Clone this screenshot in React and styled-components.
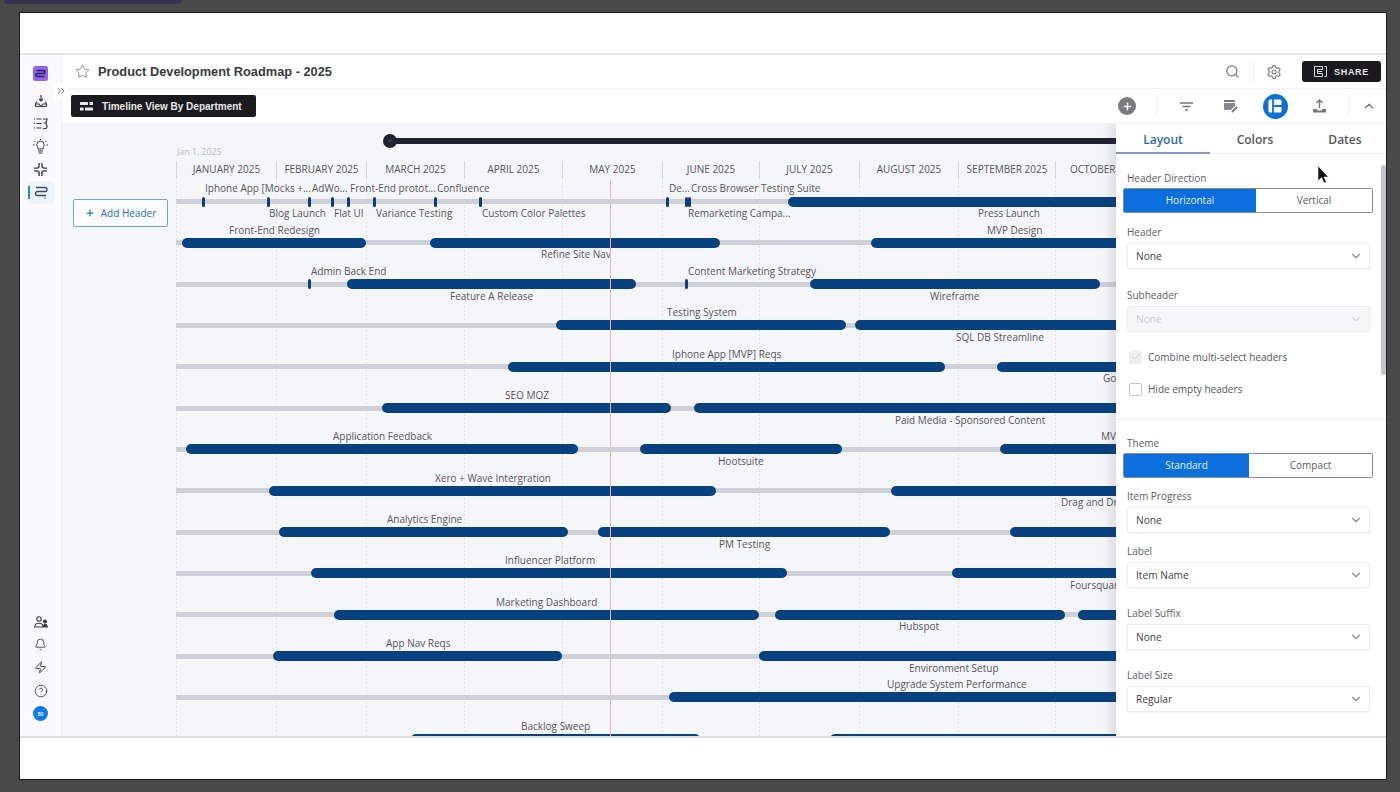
import React from "react";
import styled, { createGlobalStyle } from "styled-components";
import {
  Star,
  ChevronsRight,
  Search,
  Settings,
  Plus,
  ChevronDown,
  ChevronUp,
  Check,
  Bell,
  Zap,
  CircleHelp,
} from "lucide-react";

const GlobalStyle = createGlobalStyle`
  html, body {
    margin: 0;
    padding: 0;
    height: 792px;
    overflow: hidden;
    background: #4a4949;
    font-family: "Open Sans", "Liberation Sans", sans-serif;
  }
  * { box-sizing: border-box; }
`;

const Screen = styled.div`
  position: relative;
  width: 1400px;
  height: 792px;
  padding: 12px 13px 12px 19px;
`;

const Pill = styled.div`
  position: absolute;
  top: 0;
  left: 4px;
  width: 178px;
  height: 4px;
  background: #3a3350;
  border-radius: 0 0 8px 8px;
`;

const Frame = styled.div`
  width: 1368px;
  height: 768px;
  background: #fff;
  border: 1px solid #1c1c1c;
  padding-top: 40px;
`;

const AppShell = styled.div`
  display: flex;
  height: 685px;
  border-top: 2px solid #e4e4e6;
  border-bottom: 2px solid #dedee2;
`;

const Sidebar = styled.nav`
  width: 42px;
  flex: none;
  display: flex;
  flex-direction: column;
  justify-content: space-between;
  align-items: center;
  padding: 7px 0 11px;
  background: #fafafc;
  border-right: 1px solid #f0f0f4;
`;

const SideGroup = styled.div`
  display: flex;
  flex-direction: column;
  align-items: center;
`;

const SideIcon = styled.div`
  position: relative;
  width: 26px;
  height: 23px;
  border-radius: 4px;
  display: flex;
  align-items: center;
  justify-content: center;
  color: #3b3b40;
  background: ${(p) => (p.$active ? "#edf4fb" : "transparent")};
  margin-bottom: ${(p) => (p.$first ? "4px" : "0")};
`;

const ActiveMark = styled.span`
  position: absolute;
  left: 0;
  top: 5px;
  width: 2px;
  height: 13px;
  background: #2a86c8;
`;

const Avatar = styled.div`
  width: 15px;
  height: 15px;
  border-radius: 50%;
  background: #0f7ae8;
  color: #d8e9fb;
  font-size: 5px;
  font-weight: 700;
  display: flex;
  align-items: center;
  justify-content: center;
`;

const Main = styled.div`
  position: relative;
  flex: 1;
  min-width: 0;
  display: flex;
  flex-direction: column;
`;

const ExpandTab = styled.div`
  position: absolute;
  left: -8px;
  top: 28px;
  width: 14px;
  height: 16px;
  background: #fff;
  color: #444;
  display: flex;
  align-items: center;
  justify-content: center;
  z-index: 3;
`;

const TitleBar = styled.header`
  height: 34px;
  flex: none;
  display: flex;
  align-items: center;
  padding: 0 5px 0 13px;
  border-bottom: 1px solid #f2f2f5;
`;

const Title = styled.h1`
  margin: 0 0 0 8px;
  font-family: "Liberation Sans", Arial, sans-serif;
  font-size: 12.8px;
  font-weight: 700;
  color: #3a3a3e;
`;

const Spacer = styled.div`
  flex: 1;
`;

const IconSlot = styled.div`
  flex: none;
  width: ${(p) => p.$w || 44}px;
  display: flex;
  align-items: center;
  justify-content: center;
  color: #77777b;
`;

const EdgeSlot = styled(IconSlot)`
  margin-right: -3px;
`;

const Sep = styled.span`
  flex: none;
  width: 1px;
  height: 22px;
  background: #f0f0f3;
`;

const ShareButton = styled.button`
  flex: none;
  width: 79px;
  height: 21px;
  margin-left: 8px;
  border: 0;
  border-radius: 3px;
  background: #1a1a1e;
  color: #e6e6e8;
  font-family: "Liberation Sans", Arial, sans-serif;
  font-size: 9px;
  font-weight: 700;
  letter-spacing: 0.08em;
  display: flex;
  align-items: center;
  justify-content: center;
  gap: 7px;
  padding: 0;
`;

const ViewBar = styled.div`
  height: 35px;
  flex: none;
  display: flex;
  align-items: center;
  padding: 0 0 0 9px;
  border-bottom: 1px solid #f0f0f3;
`;

const ViewButton = styled.button`
  width: 185px;
  height: 22px;
  border: 0;
  border-radius: 2px;
  background: #1b1b1f;
  color: #e8e8ea;
  font-family: "Liberation Sans", Arial, sans-serif;
  font-size: 10px;
  font-weight: 700;
  display: flex;
  align-items: center;
  gap: 9px;
  padding: 0 0 0 9px;
`;

const RoundAdd = styled.div`
  flex: none;
  width: 18px;
  height: 18px;
  border-radius: 50%;
  background: #7b7b7d;
  color: #fff;
  display: flex;
  align-items: center;
  justify-content: center;
`;

const LayoutBadge = styled.div`
  width: 25px;
  height: 25px;
  border-radius: 50%;
  background: #1070d0;
  display: flex;
  align-items: center;
  justify-content: center;
`;

const Body = styled.div`
  position: relative;
  flex: 1;
  min-height: 0;
  display: flex;
  background: #f5f6fa;
  overflow: hidden;
`;

const HeaderColumn = styled.div`
  width: 114px;
  flex: none;
  padding: 75px 0 0 11px;
`;

const AddHeader = styled.button`
  width: 95px;
  height: 28px;
  background: #fbfcfe;
  border: 1px solid #6ea6cc;
  border-radius: 2px;
  color: #2a6fb0;
  font-family: "Open Sans", sans-serif;
  font-size: 10px;
  display: flex;
  align-items: center;
  justify-content: center;
  gap: 6px;
  padding: 0;
`;

const Chart = styled.div`
  position: relative;
  flex: 1;
  min-width: 0;
  padding-top: 14px;
  overflow: hidden;
`;

const SliderTrack = styled.div`
  position: relative;
  height: 6px;
  margin-left: 215px;
  background: #1e2230;
  border-radius: 3px 0 0 3px;
`;

const SliderKnob = styled.span`
  position: absolute;
  left: -8px;
  top: -4px;
  width: 14px;
  height: 14px;
  border-radius: 50%;
  background: #1e2230;
  color: #8a8c94;
  font-size: 6px;
  line-height: 13px;
  text-align: center;
`;

const StartDate = styled.div`
  height: 11px;
  margin-top: 3px;
  font-size: 8.8px;
  line-height: 11px;
  color: #bcbcc2;
  padding-left: 1px;
`;

const Months = styled.div`
  display: flex;
  height: 17px;
  margin-top: 3px;
`;

const Month = styled.div`
  flex: none;
  border-left: 1px solid #d8d8dc;
  font-size: 10px;
  line-height: 17px;
  color: #55555c;
  text-align: center;
  white-space: nowrap;
`;

const GridLine = styled.span`
  position: absolute;
  top: 54px;
  bottom: 0;
  width: 1px;
  background: repeating-linear-gradient(#e2e3e8 0 2px, transparent 2px 4px);
`;

const TodayLine = styled.span`
  position: absolute;
  top: 56px;
  bottom: 0;
  left: 434px;
  width: 1px;
  background: #efb6ba;
  z-index: 2;
`;

const Rows = styled.div`
  position: relative;
  margin-top: 3px;
`;

const Row = styled.div`
  position: relative;
  height: 41.33px;
`;

const Track = styled.span`
  position: absolute;
  left: 0;
  right: 0;
  top: 18px;
  height: 5px;
  background: #cdd0d6;
`;

const Bar = styled.span`
  position: absolute;
  top: 15.5px;
  height: 10px;
  border-radius: 5px;
  background: #07417f;
`;

const Milestone = styled.span`
  position: absolute;
  top: 15.5px;
  width: 3px;
  height: 10px;
  border-radius: 1.5px;
  background: #0d3f78;
`;

const ItemLabel = styled.span`
  position: absolute;
  top: ${(p) => (p.$below ? "25px" : "0.3px")};
  font-size: 10px;
  line-height: 14px;
  color: #55555c;
  white-space: nowrap;
`;

const Panel = styled.aside`
  position: absolute;
  top: 0;
  right: 0;
  bottom: 0;
  width: 270px;
  background: #fff;
  box-shadow: -6px 0 8px rgba(60, 60, 80, 0.12);
  z-index: 4;
`;

const Tabs = styled.div`
  display: flex;
  height: 30px;
  border-bottom: 1px solid #eceef2;
`;

const Tab = styled.div`
  flex: none;
  width: ${(p) => p.$w}px;
  padding-left: ${(p) => p.$pad || 0}px;
  text-align: center;
  font-size: 12px;
  font-weight: 600;
  line-height: 31px;
  height: 30px;
  color: ${(p) => (p.$active ? "#2f6aa5" : "#55555c")};
  border-bottom: ${(p) => (p.$active ? "2px solid #7c9cc0" : "0")};
`;

const PanelBody = styled.div`
  position: relative;
  padding-top: 17px;
`;

const Scrollbar = styled.span`
  position: absolute;
  top: 11px;
  right: 0;
  width: 5px;
  height: 210px;
  border-radius: 3px;
  background: #c5c6cb;
`;

const FieldLabel = styled.div`
  margin: ${(p) => p.$top || 0}px 0 0 11px;
  height: 14px;
  font-size: 10px;
  line-height: 14px;
  color: #5c5c62;
`;

const Toggle = styled.div`
  display: flex;
  width: 250px;
  height: 25px;
  margin: ${(p) => p.$top || 3}px 0 0 7px;
  border: 1px solid #8a8a90;
  border-radius: 2px;
  overflow: hidden;
`;

const ToggleOption = styled.div`
  flex: ${(p) => (p.$on ? `0 0 ${p.$w}px` : "1")};
  background: ${(p) => (p.$on ? "#0a6fdc" : "#fff")};
  color: ${(p) => (p.$on ? "#e4effb" : "#5c5c62")};
  font-size: 10px;
  line-height: 23px;
  text-align: center;
`;

const Select = styled.div`
  width: 243px;
  height: 26px;
  margin: 3.5px 0 0 11px;
  padding: 0 6px 0 8px;
  display: flex;
  align-items: center;
  justify-content: space-between;
  background: ${(p) => (p.$disabled ? "#f7f7f9" : "#fff")};
  border: 1px solid #eeeef1;
  border-radius: 2px;
  box-shadow: 0 1px 1px rgba(0, 0, 0, 0.04);
  color: ${(p) => (p.$disabled ? "#d0d0d4" : "#3f3f45")};
  font-size: 10.2px;
`;

const CheckRow = styled.div`
  display: flex;
  align-items: center;
  gap: 6px;
  height: 14px;
  margin: ${(p) => p.$top}px 0 0 13px;
  font-size: 10px;
  color: #55555c;
`;

const CheckBox = styled.span`
  width: 13px;
  height: 13px;
  border-radius: 2px;
  border: 1px solid ${(p) => (p.$disabled ? "#eeeeee" : "#c4c4c8")};
  background: ${(p) => (p.$disabled ? "#efeff1" : "#fff")};
  color: #c2c2c6;
  display: flex;
  align-items: center;
  justify-content: center;
`;

const Divider = styled.div`
  height: 1px;
  margin-top: 23px;
  background: #eeeef1;
`;

const Cursor = styled.svg`
  position: absolute;
  left: 201px;
  top: 41px;
`;

const X0 = 176;
const END = 1135;

const monthList = [
  ["JANUARY 2025", 100],
  ["FEBRUARY 2025", 90],
  ["MARCH 2025", 98],
  ["APRIL 2025", 98],
  ["MAY 2025", 100],
  ["JUNE 2025", 97],
  ["JULY 2025", 100],
  ["AUGUST 2025", 99],
  ["SEPTEMBER 2025", 97],
  ["OCTOBER 2025", 100],
];

const gridAt = [0, 100, 190, 288, 386, 486, 583, 683, 782, 879];

const rowData = [
  {
    bars: [[788, END]],
    marks: [202, 267, 308, 331, 347, 373, 434, 479, 666, 685, 688],
    above: [
      ["Iphone App [Mocks +...", 205],
      ["AdWo...", 312],
      ["Front-End protot...", 350],
      ["Confluence", 437],
      ["De...", 669],
      ["Cross Browser Testing Suite", 691],
    ],
    below: [
      ["Blog Launch", 269],
      ["Flat UI", 334],
      ["Variance Testing", 376],
      ["Custom Color Palettes", 482],
      ["Remarketing Campa...", 688],
      ["Press Launch", 978],
    ],
  },
  {
    bars: [[182, 366], [430, 720], [871, END]],
    above: [["Front-End Redesign", 229], ["MVP Design", 987]],
    below: [["Refine Site Nav", 541]],
  },
  {
    bars: [[347, 636], [810, 1100]],
    marks: [308, 685],
    above: [["Admin Back End", 311], ["Content Marketing Strategy", 688]],
    below: [["Feature A Release", 450], ["Wireframe", 930]],
  },
  {
    bars: [[556, 846], [855, END]],
    above: [["Testing System", 667]],
    below: [["SQL DB Streamline", 956]],
  },
  {
    bars: [[508, 945], [997, END]],
    above: [["Iphone App [MVP] Reqs", 672]],
    below: [["Go", 1103]],
  },
  {
    bars: [[382, 671], [694, END]],
    above: [["SEO MOZ", 505]],
    below: [["Paid Media - Sponsored Content", 895]],
  },
  {
    bars: [[186, 578], [640, 842], [1000, END]],
    above: [["Application Feedback", 333], ["MV", 1101]],
    below: [["Hootsuite", 718]],
  },
  {
    bars: [[269, 716], [891, END]],
    above: [["Xero + Wave Intergration", 435]],
    below: [["Drag and Drop", 1061]],
  },
  {
    bars: [[279, 568], [598, 890], [1010, END]],
    above: [["Analytics Engine", 387]],
    below: [["PM Testing", 719]],
  },
  {
    bars: [[311, 787], [952, END]],
    above: [["Influencer Platform", 505]],
    below: [["Foursquare", 1070]],
  },
  {
    bars: [[334, 759], [775, 1065], [1078, END]],
    above: [["Marketing Dashboard", 496]],
    below: [["Hubspot", 899]],
  },
  {
    bars: [[273, 562], [759, END]],
    above: [["App Nav Reqs", 386]],
    below: [["Environment Setup", 909]],
  },
  {
    bars: [[669, END]],
    above: [["Upgrade System Performance", 887]],
  },
  {
    bars: [[411, 700], [830, END]],
    above: [["Backlog Sweep", 521]],
  },
];

const Logo = () => (
  <svg width="15" height="15" viewBox="0 0 15 15">
    <rect width="15" height="15" rx="2.5" fill="#9163ee" />
    <path
      d="M3.5 4.5h7a1.500 1.500 0 0 1 0 3h-6a1.500 1.500 0 0 0 0 3h7"
      fill="none"
      stroke="#2c2350"
      strokeWidth="1.6"
    />
  </svg>
);

const TrayIcon = () => (
  <svg width="14" height="14" viewBox="0 0 14 14" fill="none" stroke="currentColor" strokeWidth="1.2">
    <path d="M7 1v6M5 5l2 2 2-2" />
    <path d="M3 7.5 1.5 10v1.5a1 1 0 0 0 1 1h9a1 1 0 0 0 1-1V10L11 7.5" />
    <path d="M1.5 10h3.5a2 1.5 0 0 0 4 0h3.500" />
  </svg>
);

const ListIcon = () => (
  <svg width="15" height="13" viewBox="0 0 15 13" fill="none" stroke="currentColor" strokeWidth="1.2">
    <path d="M1 2h1M1 6.500h1M1 11h1M3.500 2h5M3.500 6.500h5M3.500 11h5" />
    <path d="M10 2h4l-1 4h-2.500M13 6.500 14 9a2 2 0 0 1-2 2.500h-2" />
  </svg>
);

const BulbIcon = () => (
  <svg width="15" height="15" viewBox="0 0 15 15" fill="none" stroke="currentColor" strokeWidth="1">
    <path d="M5 10c0-2-1.200-2.500-1.200-4.200a3.700 3.700 0 0 1 7.400 0C11.200 7.500 10 8 10 10z" />
    <path d="M5 12h5M5.500 14h4M7.500 0v1M1.500 2l1 1M13.500 2l-1 1M0 6h1.500M13.500 6H15" />
  </svg>
);

const CollapseIcon = () => (
  <svg width="13" height="13" viewBox="0 0 14 14" fill="none" stroke="currentColor" strokeWidth="1.5">
    <path d="M5.500 0v3a2.500 2.500 0 0 1-2.500 2.500H0M8.500 0v3A2.500 2.500 0 0 0 11 5.500h3M5.500 14v-3A2.500 2.500 0 0 0 3 8.500H0M8.500 14v-3a2.500 2.500 0 0 1 2.500-2.500h3" />
  </svg>
);

const RoadmapIcon = () => (
  <svg width="14" height="15" viewBox="0 0 14 15" fill="none" stroke="#3b4a5c" strokeWidth="1.3">
    <path d="M2 2.500h9a2 2 0 0 1 0 4H3.500a2 2 0 0 0 0 4H12" />
    <path d="M11 12.500v1.500" stroke="#2a86c8" />
  </svg>
);

const UsersIcon = () => (
  <svg width="14" height="12" viewBox="0 0 14 12" fill="none" stroke="currentColor" strokeWidth="1.1">
    <circle cx="5" cy="3" r="2.200" />
    <path d="M.8 11c0-2.500 2-3.800 4.200-3.800S9 8.300 9.200 11z" />
    <circle cx="11" cy="5.500" r="1.500" fill="currentColor" />
    <path d="M9.500 11c0-1.500.6-2.600 1.600-2.600s2 1 2.200 2.600z" fill="currentColor" />
  </svg>
);

const ShareGlyph = () => (
  <svg width="13" height="11" viewBox="0 0 13 11" fill="none" stroke="#d8d8da" strokeWidth="1">
    <path d="M.5.500h8v3h-5v4h5v3h-8zM4 5.500h4M10.500.500h2v10h-2" />
  </svg>
);

const BarsGlyph = () => (
  <svg width="13" height="9" viewBox="0 0 13 9" fill="#e8e8ea">
    <rect x="0" y="0" width="8" height="3" rx="0.5" />
    <rect x="9.500" y="0" width="3.500" height="3" rx="0.5" />
    <rect x="0" y="5.500" width="3.500" height="3" rx="0.5" />
    <rect x="5" y="5.500" width="8" height="3" rx="0.5" />
  </svg>
);

const FilterGlyph = () => (
  <svg width="13" height="9" viewBox="0 0 13 9" fill="none" stroke="#77777b" strokeWidth="1.600">
    <path d="M0 1h13M2.500 4.500h8M5 8h3" />
  </svg>
);

const PaintGlyph = () => (
  <svg width="14" height="13" viewBox="0 0 14 13">
    <path d="M1 0h9a1 1 0 0 1 1 1v1H0V1a1 1 0 0 1 1-1z" fill="#77777b" />
    <path d="M0 3h11v3L7 10H1a1 1 0 0 1-1-1z" fill="#8a8a8e" />
    <path d="M8.500 11.500l4-4" stroke="#77777b" strokeWidth="2" strokeLinecap="round" />
  </svg>
);

const LayoutGlyph = () => (
  <svg width="14" height="14" viewBox="0 0 14 14" fill="none">
    <rect x="0.500" y="0.500" width="13" height="13" rx="1.500" fill="#fff" />
    <path d="M5 0v14M5 7h9" stroke="#1070d0" strokeWidth="1.800" />
  </svg>
);

const UploadGlyph = () => (
  <svg width="13" height="14" viewBox="0 0 13 14" fill="none" stroke="#77777b" strokeWidth="1.400">
    <path d="M6.500 9V1M3.500 4l3-3 3 3" />
    <path d="M0 10h3.500l1 1.500h4l1-1.500H13v3.500H0z" fill="#77777b" stroke="none" />
  </svg>
);

const fieldsTop = [
  ["Item Progress", "None", 11],
  ["Label", "Item Name", 11.5],
  ["Label Suffix", "None", 18.5],
  ["Label Size", "Regular", 18.5],
];

const App = () => {
  return (
    <Screen>
      <GlobalStyle />
      <Pill />
      <Frame>
        <AppShell>
          <Sidebar>
            <SideGroup>
              <SideIcon $first>
                <Logo />
              </SideIcon>
              <SideIcon>
                <TrayIcon />
              </SideIcon>
              <SideIcon>
                <ListIcon />
              </SideIcon>
              <SideIcon>
                <BulbIcon />
              </SideIcon>
              <SideIcon>
                <CollapseIcon />
              </SideIcon>
              <SideIcon $active>
                <ActiveMark />
                <RoadmapIcon />
              </SideIcon>
            </SideGroup>
            <SideGroup>
              <SideIcon>
                <UsersIcon />
              </SideIcon>
              <SideIcon>
                <Bell size={13} strokeWidth={1.6} />
              </SideIcon>
              <SideIcon>
                <Zap size={13} strokeWidth={1.8} />
              </SideIcon>
              <SideIcon>
                <CircleHelp size={14} strokeWidth={1.4} />
              </SideIcon>
              <SideIcon>
                <Avatar>BS</Avatar>
              </SideIcon>
            </SideGroup>
          </Sidebar>

          <Main>
            <ExpandTab>
              <ChevronsRight size={12} strokeWidth={1.4} />
            </ExpandTab>
            <TitleBar>
              <Star size={15} strokeWidth={1.2} color="#6a6a70" />
              <Title>Product Development Roadmap - 2025</Title>
              <Spacer />
              <IconSlot $w={42}>
                <Search size={15} strokeWidth={2} />
              </IconSlot>
              <Sep />
              <IconSlot $w={40}>
                <Settings size={16} strokeWidth={1.6} />
              </IconSlot>
              <ShareButton>
                <ShareGlyph />
                SHARE
              </ShareButton>
            </TitleBar>

            <ViewBar>
              <ViewButton>
                <BarsGlyph />
                Timeline View By Department
              </ViewButton>
              <Spacer />
              <RoundAdd>
                <Plus size={11} strokeWidth={3} />
              </RoundAdd>
              <IconSlot $w={20} />
              <Sep />
              <IconSlot $w={58}>
                <FilterGlyph />
              </IconSlot>
              <IconSlot $w={32}>
                <PaintGlyph />
              </IconSlot>
              <IconSlot $w={56}>
                <LayoutBadge>
                  <LayoutGlyph />
                </LayoutBadge>
              </IconSlot>
              <IconSlot $w={32}>
                <UploadGlyph />
              </IconSlot>
              <IconSlot $w={13} />
              <Sep />
              <EdgeSlot $w={40}>
                <ChevronUp size={14} strokeWidth={2.2} />
              </EdgeSlot>
            </ViewBar>

            <Body>
              <HeaderColumn>
                <AddHeader>
                  <Plus size={10} strokeWidth={3} />
                  Add Header
                </AddHeader>
              </HeaderColumn>

              <Chart>
                <SliderTrack>
                  <SliderKnob>‹›</SliderKnob>
                </SliderTrack>
                <StartDate>Jan 1, 2025</StartDate>
                <Months>
                  {monthList.map(([name, width]) => (
                    <Month key={name} style={{ width }}>
                      {name}
                    </Month>
                  ))}
                </Months>
                {gridAt.map((x) => (
                  <GridLine key={x} style={{ left: x }} />
                ))}
                <TodayLine />
                <Rows>
                  {rowData.map((row, index) => (
                    <Row key={index}>
                      <Track />
                      {row.bars.map(([from, to]) => (
                        <Bar key={from} style={{ left: from - X0, width: to - from }} />
                      ))}
                      {(row.marks || []).map((x) => (
                        <Milestone key={x} style={{ left: x - X0 }} />
                      ))}
                      {row.above.map(([text, x]) => (
                        <ItemLabel key={text} style={{ left: x - X0 }}>
                          {text}
                        </ItemLabel>
                      ))}
                      {(row.below || []).map(([text, x]) => (
                        <ItemLabel key={text} $below style={{ left: x - X0 }}>
                          {text}
                        </ItemLabel>
                      ))}
                    </Row>
                  ))}
                </Rows>
              </Chart>

              <Panel>
                <Tabs>
                  <Tab $active $w={94}>Layout</Tab>
                  <Tab $w={90}>Colors</Tab>
                  <Tab $w={86} $pad={4}>Dates</Tab>
                </Tabs>
                <PanelBody>
                  <Scrollbar />
                  <FieldLabel>Header Direction</FieldLabel>
                  <Toggle>
                    <ToggleOption $on $w={132}>Horizontal</ToggleOption>
                    <ToggleOption>Vertical</ToggleOption>
                  </Toggle>

                  <FieldLabel $top={12}>Header</FieldLabel>
                  <Select>
                    None
                    <ChevronDown size={14} color="#8a8a90" />
                  </Select>

                  <FieldLabel $top={19.5}>Subheader</FieldLabel>
                  <Select $disabled>
                    None
                    <ChevronDown size={14} color="#d8d8dc" />
                  </Select>

                  <CheckRow $top={18.5}>
                    <CheckBox $disabled>
                      <Check size={10} strokeWidth={1.5} />
                    </CheckBox>
                    Combine multi-select headers
                  </CheckRow>
                  <CheckRow $top={18}>
                    <CheckBox />
                    Hide empty headers
                  </CheckRow>
                  <Divider />

                  <FieldLabel $top={15.5}>Theme</FieldLabel>
                  <Toggle $top={3.5}>
                    <ToggleOption $on $w={125}>Standard</ToggleOption>
                    <ToggleOption>Compact</ToggleOption>
                  </Toggle>

                  {fieldsTop.map(([label, value, top]) => (
                    <React.Fragment key={label}>
                      <FieldLabel $top={top}>{label}</FieldLabel>
                      <Select>
                        {value}
                        <ChevronDown size={14} color="#8a8a90" />
                      </Select>
                    </React.Fragment>
                  ))}
                </PanelBody>
                <Cursor width="12" height="19" viewBox="0 0 12 19">
                  <path d="M1 1v15l3.500-3.500L7 18l2.500-1-2.500-5h4.500z" fill="#111" stroke="#fff" strokeWidth="0.600" />
                </Cursor>
              </Panel>
            </Body>
          </Main>
        </AppShell>
      </Frame>
    </Screen>
  );
};

export default App;
